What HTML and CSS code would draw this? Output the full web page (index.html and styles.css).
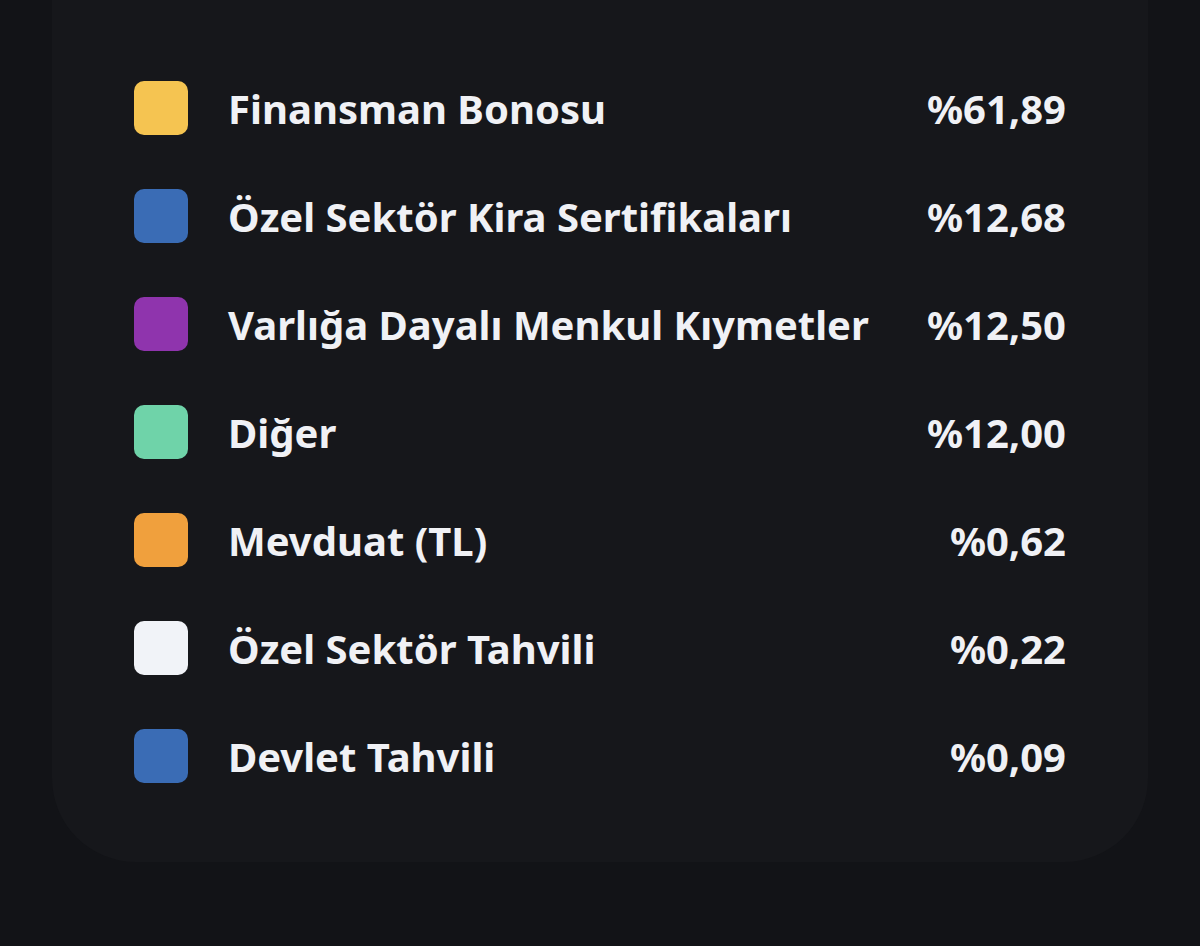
FILE: index.html
```html
<!DOCTYPE html>
<html lang="tr">
<head>
    <meta charset="UTF-8">
    <meta name="viewport" content="width=device-width, initial-scale=1.0">
    <title>Varlık Dağılımı</title>
    <link rel="stylesheet" href="styles.css">
</head>
<body>

    <div class="page">
        <div class="card">
            <ul class="legend">
                <li class="row">
                    <span class="swatch yellow"></span>
                    <span class="name">Finansman Bonosu</span>
                    <span class="value">%61,89</span>
                </li>
                <li class="row">
                    <span class="swatch blue"></span>
                    <span class="name">Özel Sektör Kira Sertifikaları</span>
                    <span class="value">%12,68</span>
                </li>
                <li class="row">
                    <span class="swatch purple"></span>
                    <span class="name">Varlığa Dayalı Menkul Kıymetler</span>
                    <span class="value">%12,50</span>
                </li>
                <li class="row">
                    <span class="swatch green"></span>
                    <span class="name">Diğer</span>
                    <span class="value">%12,00</span>
                </li>
                <li class="row">
                    <span class="swatch orange"></span>
                    <span class="name">Mevduat (TL)</span>
                    <span class="value">%0,62</span>
                </li>
                <li class="row">
                    <span class="swatch white"></span>
                    <span class="name">Özel Sektör Tahvili</span>
                    <span class="value">%0,22</span>
                </li>
                <li class="row">
                    <span class="swatch blue"></span>
                    <span class="name">Devlet Tahvili</span>
                    <span class="value">%0,09</span>
                </li>
            </ul>
        </div>
    </div>

</body>
</html>
```

FILE: styles.css
```css
body {
    margin: 0;
    background-color: #121317;
    font-family: "Noto Sans", "Open Sans", sans-serif;
    color: #f0f1f5;
}

.page {
    padding: 0 52px;
    height: 946px;
    box-sizing: border-box;
}

.card {
    background-color: #16171b;
    border-radius: 0 0 84px 84px;
    padding: 54px 82px 52px 82px;
}

.legend {
    list-style: none;
    margin: 0;
    padding: 0;
}

.row {
    display: flex;
    align-items: center;
    height: 108px;
}

.swatch {
    width: 54px;
    height: 54px;
    border-radius: 10px;
    flex-shrink: 0;
    margin-right: 40px;
}

.name {
    flex: 1;
    font-size: 40px;
    font-weight: 700;
}

.value {
    font-size: 40px;
    font-weight: 700;
}

.yellow { background-color: #f5c451; }
.blue { background-color: #3a6cb5; }
.purple { background-color: #8f34ad; }
.green { background-color: #6fd3a9; }
.orange { background-color: #f0a03d; }
.white { background-color: #f1f3f8; }
```
